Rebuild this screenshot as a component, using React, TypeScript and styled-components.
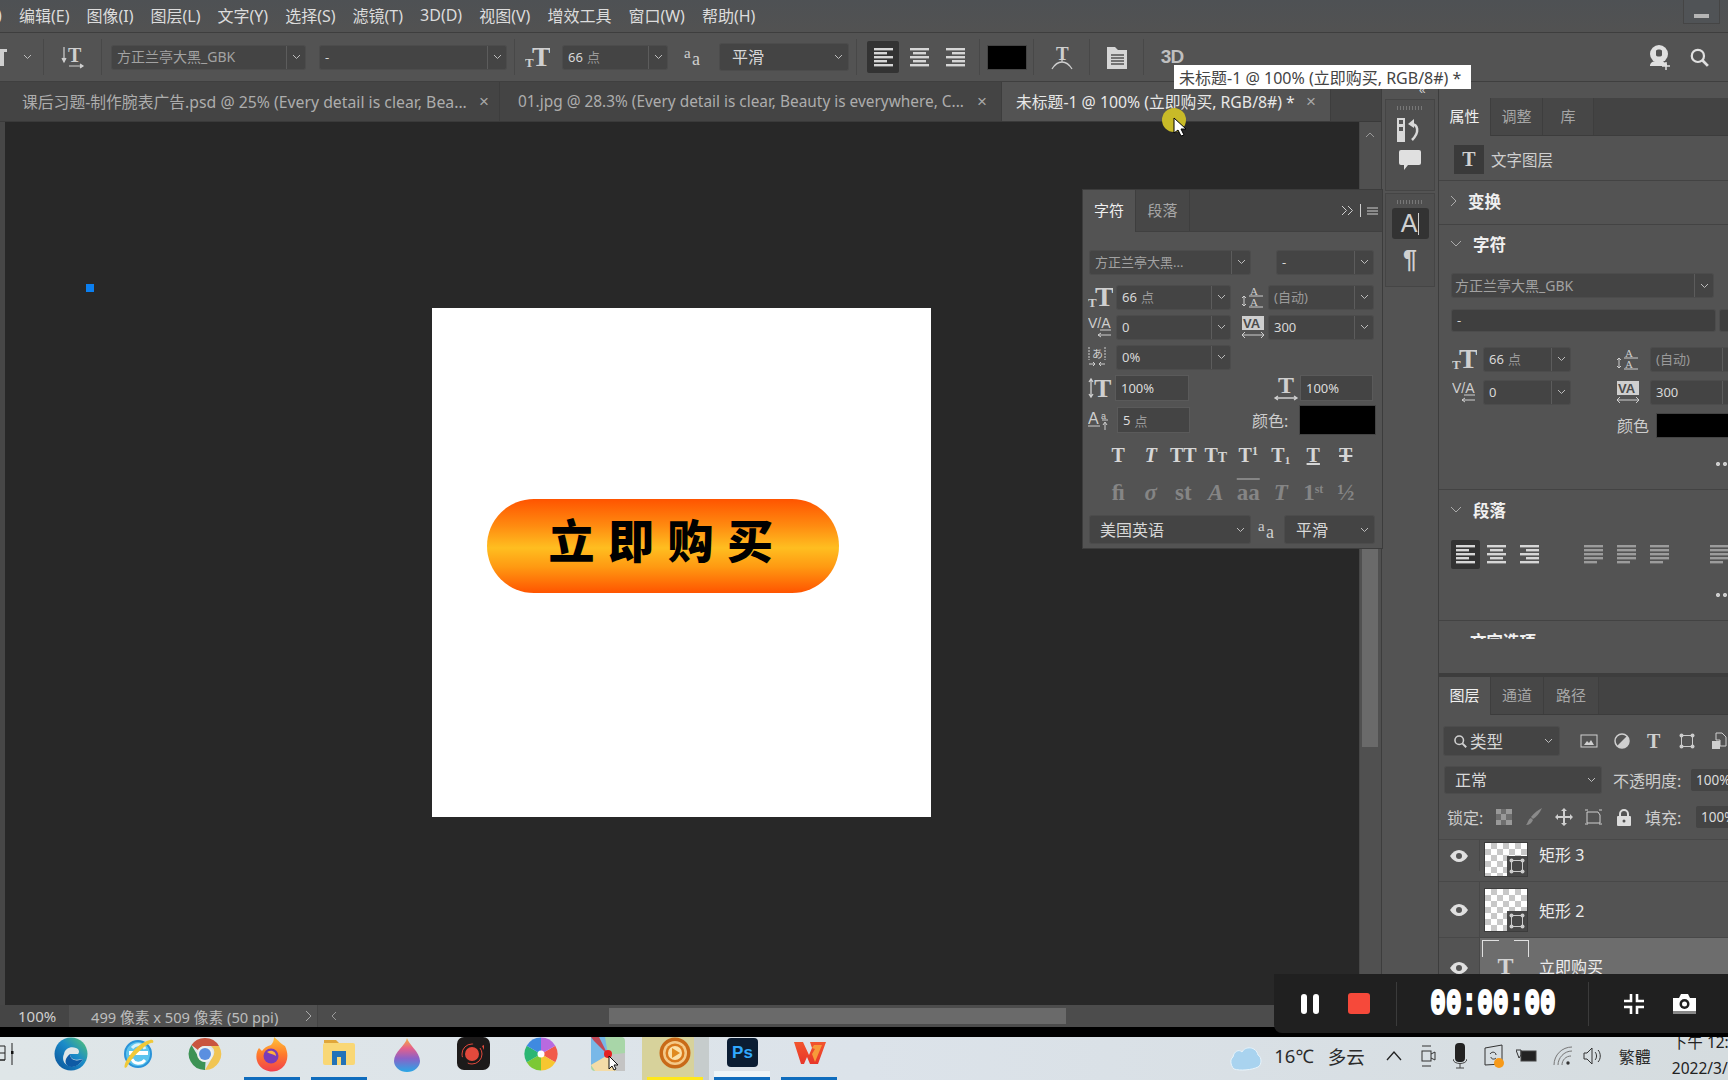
import React from "react";
import styled, { createGlobalStyle } from "styled-components";

const SANS = `"Noto Sans", "Noto Sans CJK SC", sans-serif`;
const Global = createGlobalStyle`
  html, body { margin: 0; padding: 0; background: #282828; }
  * { box-sizing: border-box; }
  svg { display: block; flex: none; }
  svg text { font-family: "Liberation Serif", serif; }
`;

const Page = styled.div`
  position: relative; width: 1728px; height: 1080px; overflow: hidden;
  display: flex; flex-direction: column; font-family: ${SANS}; font-size: 14px; color: #d6d6d6;
`;
const MenuBar = styled.div`
  height: 33px; flex: none; display: flex; align-items: center; gap: 17px; padding-bottom: 2px;
  background: linear-gradient(#4e5154, #525252); border-bottom: 1px solid #3e3e3e; position: relative; white-space: nowrap;
`;
const MenuItem = styled.span`font-size: 16px; color: #dcdcdc;`;
const MenuCut = styled(MenuItem)`width: 2px; flex: none; text-indent: -3px;`;
const MinBox = styled.div`
  position: absolute; right: 8px; top: 0; width: 37px; height: 24px; background: #505356; border: 1px solid #454545; border-top: 0;
  display: flex; align-items: flex-end; justify-content: center; padding-bottom: 5px;
  &::after { content: ""; width: 15px; height: 4px; background: #b5b5b5; }
`;
const OptionsBar = styled.div`
  height: 49px; flex: none; display: flex; align-items: stretch; background: #535353; border-bottom: 1px solid #3f3f3f;
`;
const OptCell = styled.div<{ $w: number; $gap?: number; $start?: number; $noline?: boolean }>`
  width: ${p => p.$w}px; flex: none; display: flex; align-items: center; gap: ${p => p.$gap ?? 0}px;
  justify-content: ${p => (p.$start !== undefined ? "flex-start" : "center")};
  padding-left: ${p => p.$start ?? 0}px; margin: 6px 0;
  border-right: ${p => (p.$noline ? "0" : "1px solid #484848")};
`;
const Spacer = styled.div`flex: 1;`;
const HGap = styled.div<{ $w: number }>`width: ${p => p.$w}px; flex: none;`;
const SelectBox = styled.div<{ $w: number; $h?: number; $dark?: boolean; $mt?: number }>`
  width: ${p => p.$w}px; height: ${p => p.$h ?? 23}px; flex: none; display: flex; align-items: stretch;
  background: ${p => (p.$dark ? "#3f3f3f" : "#444")}; border-radius: 2px; margin-top: ${p => p.$mt ?? 0}px;
  box-shadow: 0 0 0 1px #4c4c4c; overflow: hidden;
`;
const SelectText = styled.span<{ $dim?: boolean; $pl?: number; $fs?: number }>`
  flex: 1; min-width: 0; padding-left: ${p => p.$pl ?? 5}px; line-height: 1; display: flex; align-items: center; white-space: nowrap; overflow: hidden;
  font-size: ${p => p.$fs ?? 13}px; color: ${p => (p.$dim ? "#a2a2a2" : "#d8d8d8")};
`;
const Unit = styled.span`color: #9a9a9a; margin-left: 4px;`;
const UnitBare = styled(Unit)`margin-left: 0;`;
const ChevCell = styled.span<{ $line?: boolean; $w?: number }>`
  width: ${p => p.$w ?? 19}px; flex: none; display: flex; align-items: center; justify-content: center;
  border-left: ${p => (p.$line ? "1px solid #5c5c5c" : "0")};
`;

const Chev = ({ c = "#bdbdbd" }: { c?: string }) => (
  <svg width="9" height="6" viewBox="0 0 9 6"><path d="M1 1l3.5 3.5L8 1" fill="none" stroke={c} strokeWidth="1" /></svg>
);
const Select = (p: { w: number; h?: number; text: React.ReactNode; dim?: boolean; line?: boolean; dark?: boolean; pl?: number; mt?: number; cw?: number; fs?: number }) => (
  <SelectBox $w={p.w} $h={p.h} $dark={p.dark} $mt={p.mt}>
    <SelectText $dim={p.dim} $pl={p.pl} $fs={p.fs}>{p.text}</SelectText>
    <ChevCell $line={p.line !== false} $w={p.cw}><Chev /></ChevCell>
  </SelectBox>
);

const G = "#cfcfcf";
const T = (p: { x: number; y: number; s: number; w?: boolean; c?: string; i?: boolean; children: React.ReactNode }) => (
  <text x={p.x} y={p.y} fontSize={p.s} fontWeight={p.w === false ? 400 : 700} fontStyle={p.i ? "italic" : "normal"} fill={p.c ?? G}>{p.children}</text>
);
const SizeIcon = () => (
  <svg width="25" height="23" viewBox="0 0 25 23"><T x={0} y={21} s={13}>T</T><T x={7} y={20} s={28}>T</T></svg>
);
const OrientIcon = () => (
  <svg width="24" height="26" viewBox="0 0 24 26"><path d="M3 3v14M1 14l2 4 2-4M8 22h14M19 20l3 2-3 2" stroke={G} fill={G} strokeWidth="1.2" /><T x={7} y={18} s={20}>T</T></svg>
);
const AaIcon = () => (
  <svg width="20" height="20" viewBox="0 0 20 20"><T x={0} y={11} s={15} w={false}>a</T><T x={8} y={18} s={18} w={false}>a</T></svg>
);
const LeadIcon = () => (
  <svg width="24" height="24" viewBox="0 0 24 24"><text x="9" y="10" fontSize="11" fill={G}>A</text><text x="9" y="21" fontSize="11" fill={G}>A</text><path d="M8 11h14M8 22h14M3 11v10" stroke={G} /><path d="M1 13l2-2 2 2M1 19l2 2 2-2" stroke={G} fill="none" /></svg>
);
const KernIcon = () => (
  <svg width="24" height="24" viewBox="0 0 24 24"><text x="0" y="13" fontSize="14" fill={G} style={{ fontFamily: "Liberation Sans" }}>V/A</text><path d="M12 15h11M10 20h13M13 18l-3 2 3 2" stroke={G} fill="none" /></svg>
);
const TrackIcon = () => (
  <svg width="24" height="24" viewBox="0 0 24 24"><rect x="1" y="1" width="22" height="14" fill={G} /><text x="2" y="13" fontSize="13" fontWeight="700" fill="#4a4a4a" style={{ fontFamily: "Liberation Sans" }}>VA</text><path d="M1 20h22M4 17l-3 3 3 3M20 17l3 3-3 3" stroke={G} fill="none" /></svg>
);
const TsumeIcon = () => (
  <svg width="20" height="22" viewBox="0 0 20 22"><text x="4" y="12" fontSize="11" fill={G} style={{ fontFamily: "Noto Sans CJK JP" }}>あ</text><path d="M1 1v13M17 1v13" stroke={G} strokeDasharray="2 1" /><path d="M1 18h6M17 18h-6M5 16l2 2-2 2M13 16l-2 2 2 2" stroke={G} fill="none" /></svg>
);
const VScaleIcon = () => (
  <svg width="26" height="26" viewBox="0 0 26 26"><T x={6} y={22} s={26}>T</T><path d="M3 5v16M1 7l2-3 2 3M1 19l2 3 2-3" stroke={G} fill="none" strokeWidth="1.3" /></svg>
);
const HScaleIcon = () => (
  <svg width="26" height="26" viewBox="0 0 26 26"><T x={5} y={18} s={24}>T</T><path d="M2 23h22M5 21l-3 2 3 2M21 21l3 2-3 2" stroke={G} fill="none" strokeWidth="1.3" /></svg>
);
const BaseIcon = () => (
  <svg width="22" height="22" viewBox="0 0 22 22"><text x="0" y="15" fontSize="16" fill={G} style={{ fontFamily: "Liberation Sans" }}>A</text><path d="M0 17h12" stroke={G} /><text x="13" y="10" fontSize="9" fill={G} style={{ fontFamily: "Liberation Sans" }}>a</text><path d="M14 11h6M17 21v-7M15 16l2-3 2 3" stroke={G} fill="none" /></svg>
);
const AlignIcon = ({ k, c = "#d6d6d6" }: { k: "l" | "c" | "r" | "j"; c?: string }) => {
  const ws = [19, 13, 19, 13, 19];
  return (
    <svg width="19" height="19" viewBox="0 0 19 19">
      {ws.map((w, i) => {
        const wd = k === "j" ? (i === 4 ? 13 : 19) : w;
        const x = k === "l" || k === "j" ? 0 : k === "c" ? (19 - wd) / 2 : 19 - wd;
        return <rect key={i} x={x} y={i * 4} width={wd} height={2.4} fill={c} />;
      })}
    </svg>
  );
};
const AlignBtn = styled.div<{ $on?: boolean; $w?: number; $h?: number }>`
  width: ${p => p.$w ?? 32}px; height: ${p => p.$h ?? 32}px; display: flex; align-items: center; justify-content: center; flex: none;
  background: ${p => (p.$on ? "#333" : "transparent")}; border-radius: 2px;
`;
const Swatch = styled.div<{ $w: number; $h: number }>`
  width: ${p => p.$w}px; height: ${p => p.$h}px; background: #000; flex: none; box-shadow: 0 0 0 1px #444;
`;
const ThreeD = styled.span`font: 700 19px "Liberation Sans", sans-serif; letter-spacing: -1px; color: #bfbfbf;`;

/* Workspace */
const Workspace = styled.div`flex: none; height: 923px; display: flex; background: #535353;`;
const DocColumn = styled.div`width: 1381px; flex: none; display: flex; flex-direction: column;`;
const TabBar = styled.div`height: 40px; flex: none; display: flex; background: #444; border-bottom: 1px solid #3a3a3a;`;
const DocTab = styled.div<{ $w: number; $on?: boolean; $pl: number; $pr?: number; $fs?: number }>`
  width: ${p => p.$w}px; flex: none; display: flex; align-items: center; justify-content: space-between; padding: 0 ${p => p.$pr ?? 14}px 0 ${p => p.$pl}px;
  background: ${p => (p.$on ? "#535353" : "#444")}; color: ${p => (p.$on ? "#e8e8e8" : "#adadad")};
  border-right: 1px solid #3d3d3d; font-size: ${p => p.$fs ?? 15.8}px; white-space: nowrap;
`;
const Close = styled.span`font-size: 17px; color: #a8a8a8; font-family: "Liberation Sans", sans-serif;`;
const CanvasRow = styled.div`flex: 1; display: flex; min-height: 0;`;
const LeftEdge = styled.div`width: 5px; flex: none; background: #474747;`;
const Canvas = styled.div`
  flex: 1; background: #282828; position: relative; padding: 186px 0 0 427px;
`;
const Marker = styled.div`position: absolute; left: 81px; top: 162px; width: 8px; height: 8px; background: #0b7ff0;`;
const Artboard = styled.div`
  width: 499px; height: 509px; background: #fff; padding: 191px 0 0 55px;
`;
const Pill = styled.div`
  width: 352px; height: 94px; border-radius: 47px; display: flex; align-items: center; justify-content: center;
  background: linear-gradient(#ff5400 0%, #ff8a10 28%, #ffbe20 52%, #ff9a12 72%, #ff5400 100%);
  font-family: "Noto Sans CJK SC", sans-serif; font-weight: 900; font-size: 46px; color: #000; letter-spacing: 13.5px; padding: 0 0 16px 9px;
`;
const VScroll = styled.div`width: 22px; flex: none; background: #505050; border-left: 1px solid #474747; padding: 5px 3px 0 2px; display: flex; flex-direction: column; gap: 8px;`;
const ScrollThumb = styled.div`flex: none; height: 557px; margin-top: 39px; background: #6a6a6a;`;
const ScrollUp = styled.div`height: 16px; flex: none; display: flex; align-items: center; justify-content: center;`;

const Dock = styled.div`
  width: 57px; flex: none; padding: 17px 3px 0 3px; border-left: 1px solid #3d3d3d; display: flex; flex-direction: column; gap: 2px; position: relative;
`;
const Collapse = styled.span`position: absolute; left: 37px; top: 1px; color: #cfcfcf; font-size: 12px; line-height: 14px; font-family: "Liberation Sans", sans-serif;`;
const DockGroup = styled.div<{ $h: number; $gap: number }>`
  height: ${p => p.$h}px; background: #4f4f4f; border: 1px solid #454545;
  display: flex; flex-direction: column; align-items: center; padding-top: 6px; gap: ${p => p.$gap}px;
`;
const Grip = styled.div`
  width: 26px; height: 4px; flex: none; background: repeating-linear-gradient(90deg, #777 0 1px, transparent 1px 3px);
`;
const DockActive = styled.div`
  width: 37px; height: 31px; background: #333; border-radius: 3px; display: flex; align-items: center; justify-content: center; gap: 1px;
  font: 400 25px "Liberation Sans", sans-serif; color: #d0d0d0;
  &::after { content: ""; width: 1px; height: 22px; background: #d0d0d0; }
`;
const Pilcrow = styled.span`font: 700 25px/28px "Liberation Sans", sans-serif; color: #d0d0d0; margin-top: 2px;`;

/* Right panel */
const RightPanel = styled.div`flex: 1; min-width: 0; overflow: hidden; padding-top: 16px; border-left: 1px solid #3d3d3d; display: flex; flex-direction: column;`;
const PanelTabs = styled.div<{ $h?: number }>`height: ${p => p.$h ?? 38}px; flex: none; display: flex; background: #434343; border-bottom: 1px solid #3c3c3c;`;
const PanelTab = styled.div<{ $on?: boolean; $w: number }>`
  width: ${p => p.$w}px; flex: none; display: flex; align-items: center; justify-content: center; font-size: 15px; padding-bottom: 3px;
  background: ${p => (p.$on ? "#535353" : "#474747")}; color: ${p => (p.$on ? "#f0f0f0" : "#a6a6a6")};
  border-right: 1px solid #3e3e3e; margin-bottom: ${p => (p.$on ? "-1px" : "0")}; position: relative;
`;
const KindRow = styled.div`height: 45px; flex: none; display: flex; align-items: center; padding: 3px 0 0 15px; gap: 7px; border-bottom: 1px solid #434343; font-size: 15.5px; color: #cfcfcf;`;
const KindIcon = styled.div`width: 30px; height: 29px; background: #3a3a3a; display: flex; align-items: center; justify-content: center; font: 700 20px "Liberation Serif", serif; color: #d0d0d0;`;
const Section = styled.div<{ $h: number; $flat?: boolean }>`height: ${p => p.$h}px; flex: none; border-bottom: ${p => (p.$flat ? "0" : "1px solid #434343")}; overflow: hidden; position: relative;`;
const SectionHead = styled.div<{ $h?: number }>`
  height: ${p => p.$h ?? 43}px; display: flex; align-items: center; gap: 11px; padding: 0 0 3px 11px; font-weight: 700; font-size: 16.5px; color: #f0f0f0;
  font-family: "Noto Sans CJK SC", sans-serif;
`;
const ChevRight = () => <svg width="7" height="12" viewBox="0 0 7 12"><path d="M1 1l5 5-5 5" fill="none" stroke="#aaa" /></svg>;
const ChevDown = () => <svg width="12" height="7" viewBox="0 0 12 7"><path d="M1 1l5 5 5-5" fill="none" stroke="#aaa" /></svg>;
const FieldRow = styled.div<{ $mt?: number; $pl?: number; $gap?: number }>`
  display: flex; align-items: center; margin-top: ${p => p.$mt ?? 0}px; padding-left: ${p => p.$pl ?? 13}px; gap: ${p => p.$gap ?? 0}px;
`;
const IconSlot = styled.div<{ $w: number; $ml?: number }>`width: ${p => p.$w}px; margin-left: ${p => p.$ml ?? 0}px; flex: none; display: flex; justify-content: flex-start; align-items: center;`;
const Label = styled.span<{ $ml?: number; $w?: number; $right?: boolean }>`
  margin-left: ${p => p.$ml ?? 0}px; ${p => (p.$w ? `width:${p.$w}px;` : "")} flex: none; font-size: 16px; color: #cdcdcd; white-space: nowrap; text-align: ${p => (p.$right ? "right" : "left")};
`;
const Dots = styled.div<{ $ml: number; $mt: number }>`
  margin: ${p => p.$mt}px 0 0 ${p => p.$ml}px; width: 20px; height: 4px;
  background: radial-gradient(circle at 2px 2px, #ccc 2px, transparent 2.2px) 0 0 / 7px 4px repeat-x;
`;
const AlignRow = styled.div`display: flex; align-items: center; padding-left: 12px; margin-top: 8px;`;
const ClippedHead = styled.div`
  height: 6px; overflow: hidden; padding-left: 31px; font-size: 16.5px; font-weight: 700; color: #f0f0f0; line-height: 20px; margin-top: 12px;
  & > span { display: block; transform: translateY(-1px); }
`;
const DarkRule = styled.div`height: 4px; flex: none; background: #3d3d3d;`;
const FilterRow = styled.div`display: flex; align-items: center; padding: 0 0 0 5px; margin-top: 12px; height: 28px;`;
const SearchBox = styled.div`
  width: 115px; height: 28px; flex: none; background: #444; box-shadow: 0 0 0 1px #4c4c4c; display: flex; align-items: center; padding: 0 6px 0 9px; gap: 3px; font-size: 16.5px; border-radius: 2px;
  & > span { flex: 1; }
`;
const FilterIcons = styled.div`display: flex; margin-left: 14px; gap: 0;`;
const FilterCell = styled.div`width: 32.5px; flex: none; display: flex; justify-content: center; align-items: center;`;
const BlendRow = styled.div<{ $mt: number; $pl: number }>`display: flex; align-items: center; padding-left: ${p => p.$pl}px; margin-top: ${p => p.$mt}px;`;
const Amount = styled.div<{ $ml: number; $h?: number }>`
  margin-left: ${p => p.$ml}px; height: ${p => p.$h ?? 22}px; flex: 1; background: #444; display: flex; align-items: center; padding-left: 5px; font-size: 13.5px; color: #dcdcdc; border-radius: 2px 0 0 2px;
`;
const LockCell = styled.div`width: 30px; flex: none; display: flex; justify-content: center; align-items: center;`;
const LayerList = styled.div`margin-top: 10px; display: flex; flex-direction: column; border-top: 1px solid #484848;`;
const LayerRow = styled.div<{ $h: number; $on?: boolean; $pb?: number }>`
  height: ${p => p.$h}px; flex: none; display: flex; align-items: center; border-bottom: 1px solid #484848; padding-bottom: ${p => p.$pb ?? 0}px;
  background: ${p => (p.$on ? "#6d6d6d" : "#535353")};
`;
const EyeCell = styled.div`width: 41px; align-self: stretch; flex: none; background: #535353; border-right: 1px solid #484848; display: flex; align-items: center; justify-content: center;`;
const Thumb = styled.div<{ $h: number; $mt?: number }>`
  width: 42px; height: ${p => p.$h}px; margin: ${p => p.$mt ?? 0}px 0 0 5px; flex: none; position: relative;
  background: repeating-conic-gradient(#c8c8c8 0 25%, #fff 0 50%) 0 0 / 12px 12px; box-shadow: 0 0 0 1px #3c3c3c;
`;
const Badge = styled.div`
  position: absolute; right: 0; bottom: 0; width: 20px; height: 20px; background: #474747; display: flex; align-items: center; justify-content: center;
`;
const TextThumb = styled.div`
  width: 47px; height: 40px; margin-left: 2px; flex: none; position: relative; align-self: flex-start; margin-top: 1px;
  border-top: 1px solid transparent; display: flex; justify-content: center; padding-top: 14px; font: 700 24px/24px "Liberation Serif", serif; color: #d4d4d4;
  &::before { content: ""; position: absolute; left: 0; top: 0; width: 16px; height: 16px; border: solid #e0e0e0; border-width: 1px 0 0 1px; }
  &::after { content: ""; position: absolute; right: 0; top: 0; width: 14px; height: 16px; border: solid #e0e0e0; border-width: 1px 1px 0 0; }
`;
const LayerName = styled.span<{ $ml: number; $up?: number }>`margin-left: ${p => p.$ml}px; font-size: 16px; color: #ececec; transform: translateY(${p => p.$up ?? 0}px);`;

/* Status */
const StatusBar = styled.div`height: 22px; flex: none; display: flex; background: #4c4c4c; align-items: stretch; color: #d0d0d0; font-size: 15px;`;
const Zoom = styled.div`width: 69px; flex: none; background: #454545; padding-left: 18px; display: flex; align-items: center;`;
const DocInfo = styled.div`width: 249px; flex: none; background: #515151; padding: 0 5px 0 22px; display: flex; align-items: center; justify-content: space-between; color: #bdbdbd; border-right: 1px solid #444; white-space: nowrap; font-size: 14.7px;`;
const HTrack = styled.div`flex: 1; display: flex; align-items: center; padding-left: 13px;`;
const HThumb = styled.div`width: 457px; height: 16px; background: #6a6a6a; margin-left: 272px;`;
const BlackBar = styled.div`height: 10px; flex: none; background: #000;`;

/* Taskbar */
const Taskbar = styled.div`flex: 1; display: flex; align-items: stretch; background: linear-gradient(90deg, #dfe6e8, #dce3ea 50%, #d5dcdf); position: relative; overflow: hidden;`;
const TaskEdge = styled.div`width: 37px; flex: none; padding-top: 4px; overflow: hidden; position: relative;`;
const TaskIcons = styled.div`display: flex;`;
const TaskSlot = styled.div<{ $bar?: string; $bg?: string; $top?: boolean }>`
  width: 67.2px; flex: none; display: flex; justify-content: center; padding-top: 0; position: relative;
  background: ${p => p.$bg ?? "transparent"};
  &::after { content: ""; position: absolute; left: 5px; right: 6px; bottom: 0; height: ${p => (p.$bar ? "3px" : "0")}; background: ${p => p.$bar ?? "none"}; }
  &::before { content: ""; position: absolute; left: 5px; right: 6px; bottom: 3px; height: ${p => (p.$top ? "6px" : "0")}; background: #eef5f8; }
`;
const Tray = styled.div`flex: 1; display: flex; align-items: center; padding-left: 387px; color: #222; white-space: nowrap; position: relative; padding-bottom: 6px; overflow: hidden;`;
const TrayText = styled.span<{ $ml: number; $s?: number }>`margin-left: ${p => p.$ml}px; font-size: ${p => p.$s ?? 18.5}px; color: #2b2b2b; flex: none;`;
const TrayIcon = styled.div<{ $ml: number }>`margin-left: ${p => p.$ml}px; flex: none; display: flex;`;
const Clock = styled.div`
  margin-left: 21px; flex: none; display: flex; flex-direction: column; font-size: 15.5px; line-height: 26px; color: #222; margin-top: -14px; height: 52px; transform: translateY(6px);
`;

/* Overlays */
const Tooltip = styled.div`
  position: absolute; left: 1174px; top: 65px; width: 297px; height: 24px; background: #fff; color: #444; font-size: 16px; display: flex; align-items: center; padding-left: 5px; white-space: nowrap; z-index: 6;
`;
const Spot = styled.div`position: absolute; left: 1162px; top: 108px; width: 24px; height: 24px; border-radius: 50%; background: #c8ba28; z-index: 5;`;
const Pointer = styled.div`position: absolute; left: 1173px; top: 117px; z-index: 6;`;
const Float = styled.div`
  position: absolute; left: 1083px; top: 190px; width: 299px; height: 358px; background: #535353; box-shadow: 0 0 0 1px #3c3c3c; z-index: 3; display: flex; flex-direction: column;
`;
const FloatTabs = styled.div`height: 42px; flex: none; display: flex; background: #454545; position: relative; border-bottom: 1px solid #404040;`;
const FloatMenu = styled.div`position: absolute; right: 4px; top: 14px; display: flex; align-items: center; gap: 6px;`;
const FloatRow = styled.div<{ $mt: number; $h?: number; $pl?: number }>`
  height: ${p => p.$h ?? 22}px; margin-top: ${p => p.$mt}px; flex: none; display: flex; align-items: center; padding-left: ${p => p.$pl ?? 5}px;
`;
const FloatCol = styled.div<{ $w: number; $full?: boolean }>`width: ${p => p.$w}px; flex: none; display: flex; align-items: center; height: ${p => (p.$full ? "100%" : "auto")};`;
const TextInput = styled.div<{ $w: number }>`
  width: ${p => p.$w}px; height: 100%; flex: none; background: #444; box-shadow: inset 0 0 0 1px #5a5a5a; padding-left: 6px; font-size: 13px; color: #dcdcdc; display: flex; align-items: center;
`;
const GlyphRow = styled.div<{ $mt: number; $dim?: boolean }>`
  margin-top: ${p => p.$mt}px; height: 30px; flex: none; display: flex; padding-left: 19px;
  color: ${p => (p.$dim ? "#858585" : "#d6d6d6")}; font: 700 ${p => (p.$dim ? 23 : 20)}px/30px "Liberation Serif", serif;
`;
const Glyph = styled.div<{ $ul?: boolean; $st?: boolean; $i?: boolean; $ol?: boolean }>`
  width: 32.5px; flex: none; display: flex; align-items: baseline; justify-content: center; white-space: nowrap;
  font-style: ${p => (p.$i ? "italic" : "normal")};
  text-decoration: ${p => (p.$ul ? "underline" : p.$st ? "line-through" : p.$ol ? "overline" : "none")};
`;
const SmallCap = styled.span`font-size: 14px;`;
const Sup = styled.span`font-size: 12px; transform: translateY(-7px);`;
const Sub = styled.span`font-size: 11px; transform: translateY(2px);`;

const RecBar = styled.div`
  position: absolute; left: 1274px; top: 974px; width: 454px; height: 59px; background: #202020; z-index: 7; border-radius: 0 0 0 8px;
  display: flex; align-items: center; color: #fff;
`;
const Pause = styled.div`
  margin-left: 27px; width: 18px; height: 20px; display: flex; justify-content: space-between; flex: none;
  &::before, &::after { content: ""; width: 6px; height: 100%; background: #fff; border-radius: 3px; }
`;
const Stop = styled.div`margin-left: 29px; width: 22px; height: 21px; border-radius: 3px; background: #f6493a; flex: none;`;
const RecDiv = styled.div<{ $ml: number }>`margin-left: ${p => p.$ml}px; width: 1px; height: 44px; background: #3b3b3b; flex: none;`;
const Timer = styled.div`
  margin-left: 32px; flex: none; width: 128px; text-align: center; font: 700 26px "Liberation Mono", monospace; color: #fff; -webkit-text-stroke: 1.6px #fff; transform: scaleY(1.4); letter-spacing: 0.1px;
`;
const RecIcon = styled.div<{ $ml: number }>`margin-left: ${p => p.$ml}px; flex: none; display: flex;`;

const sector = (cx: number, cy: number, r: number, a: number, b: number) => {
  const p = (d: number) => [cx + r * Math.cos((d * Math.PI) / 180), cy + r * Math.sin((d * Math.PI) / 180)];
  const [x1, y1] = p(a), [x2, y2] = p(b);
  return `M${cx} ${cy}L${x1} ${y1}A${r} ${r} 0 ${b - a > 180 ? 1 : 0} 1 ${x2} ${y2}Z`;
};

const EdgeLogo = () => (
  <svg width="36" height="34" viewBox="0 0 36 34">
    <defs>
      <linearGradient id="eg" x1="0" y1="1" x2="1" y2="0"><stop offset="0" stopColor="#0a4f96" /><stop offset="0.55" stopColor="#1a8bc9" /><stop offset="1" stopColor="#5ac86c" /></linearGradient>
    </defs>
    <circle cx="18" cy="17" r="16.5" fill="url(#eg)" />
    <path d="M11 17c1-6 7-8 12-6 3 1 4 4 2 6h-8c0 5 5 7 13 5-3 6-9 9-14 7-6-2-7-8-5-12z" fill="#dfe6e8" />
    <path d="M17 17c0 6 6 8 13 5-3 6-10 10-15 7 -4-3-3-8 2-12z" fill="#0e5aa5" />
  </svg>
);
const IELogo = () => (
  <svg width="36" height="34" viewBox="0 0 36 34">
    <circle cx="18" cy="17" r="13" fill="#5cc4ee" stroke="#2a93d8" strokeWidth="2" />
    <path d="M9 16h19" stroke="#fff" strokeWidth="4" />
    <path d="M25 23c-4 5-11 4-13-1" stroke="#fff" strokeWidth="3" fill="none" />
    <path d="M12 11c4-5 11-4 13 1" stroke="#d8f2fb" strokeWidth="3" fill="none" />
    <path d="M5 31C2 27 16 6 30 3c3-1 4 1 3 3-3-3-22 14-26 24z" fill="#f0c93a" />
  </svg>
);
const ChromeLogo = () => (
  <svg width="34" height="34" viewBox="0 0 34 34">
    <path d="M17 1a16 16 0 0 1 14 8H17a8 8 0 0 0-7 4L3.500 8A16 16 0 0 1 17 1z" fill="#c9553f" />
    <path d="M31 9a16 16 0 0 1-14 24l7-12a8 8 0 0 0-1-12z" fill="#f1c553" />
    <path d="M3.500 8l7 12a8 8 0 0 0 7 5l-.5 8A16 16 0 0 1 3.500 8z" fill="#3d9355" />
    <circle cx="17" cy="17" r="8" fill="#edf0f0" /><circle cx="17" cy="17" r="6" fill="#5a8fe0" />
  </svg>
);
const FirefoxLogo = () => (
  <svg width="36" height="36" viewBox="0 0 36 36">
    <defs><linearGradient id="ff" x1="0.5" y1="0" x2="0.5" y2="1"><stop offset="0" stopColor="#ffc43a" /><stop offset="0.5" stopColor="#ff7a2c" /><stop offset="1" stopColor="#f0404e" /></linearGradient></defs>
    <path d="M20 0c5 4 6 6 11 9 4 8 3 17-3 22-7 6-18 4-23-3C1 22 2 15 5 11l3 3c2-3 5-5 9-6 2-2 3-5 3-8z" fill="url(#ff)" />
    <circle cx="17" cy="19" r="7.500" fill="#7a3bb8" /><path d="M13 15c5-3 9 0 9 4-3-2-6-2-9-4z" fill="#ffb13d" />
  </svg>
);
const FolderLogo = () => (
  <svg width="34" height="32" viewBox="0 0 34 32">
    <path d="M2 3h12l3 3H2z" fill="#e0a63a" /><rect x="1" y="6" width="32" height="22" rx="2" fill="#f9d775" />
    <path d="M10 14h14v14h-5v-8h-4v8h-5z" fill="#2272b8" />
  </svg>
);
const DropLogo = () => (
  <svg width="30" height="36" viewBox="0 0 30 36">
    <defs><linearGradient id="dr" x1="0" y1="0" x2="0" y2="1"><stop offset="0" stopColor="#f6b13a" /><stop offset="0.3" stopColor="#e5608a" /><stop offset="0.6" stopColor="#8a62c8" /><stop offset="1" stopColor="#28a8e6" /></linearGradient></defs>
    <path d="M15 1c1 6 13 14 13 23a13 11 0 0 1-26 0C2 15 14 8 15 1z" fill="url(#dr)" />
  </svg>
);
const RecLogo = () => (
  <svg width="33" height="33" viewBox="0 0 33 33">
    <rect width="33" height="33" rx="7" fill="#1c1a1a" /><circle cx="15" cy="17" r="7" fill="#e2493c" /><circle cx="15" cy="17" r="10" fill="none" stroke="#e2493c" strokeWidth="1" strokeDasharray="20 8" /><path d="M25 9l2-1v5z" fill="#e2493c" />
  </svg>
);
const WheelLogo = () => (
  <svg width="34" height="34" viewBox="0 0 34 34">
    {["#f15a4a", "#f7c630", "#7cc835", "#2bb673", "#3f8ae0", "#b86ae0"].map((c, i) => (
      <path key={c} d={sector(17, 17, 16.5, -30 + i * 60, 30 + i * 60)} fill={c} />
    ))}
    <circle cx="17" cy="17" r="3.500" fill="#fff" />
  </svg>
);
const MapLogo = () => (
  <svg width="34" height="34" viewBox="0 0 34 34">
    <rect width="34" height="34" rx="4" fill="#a8d6a8" />
    <path d="M0 0h14L17 18 0 28z" fill="#78b8e8" /><path d="M0 28L17 18l8 16H4z" fill="#f4dca8" /><path d="M25 34L17 18l17-2v18z" fill="#c4c4c4" />
    <path d="M0 0h8l9 18L3 4z" fill="#c04a58" /><circle cx="17" cy="17" r="4" fill="#e42222" />
    <path d="M18 19v13l3-3 2 4 2-1-2-4h4z" fill="#fff" stroke="#111" />
  </svg>
);
const PlayLogo = () => (
  <svg width="32" height="32" viewBox="0 0 32 32">
    <circle cx="16" cy="16" r="15.500" fill="#c86a18" /><circle cx="16" cy="16" r="12" fill="#f4c988" /><circle cx="16" cy="16" r="9.500" fill="#d9791c" /><circle cx="16" cy="16" r="7" fill="#fbe0a8" />
    <path d="M13 11l8 5-8 5z" fill="#e08a20" />
  </svg>
);
const PsBadge = styled.div`width: 31px; height: 29px; background: #0b1d33; border-radius: 4px; color: #31a8ff; font: 700 17px/29px "Liberation Sans", sans-serif; text-align: center; margin-top: 1px;`;
const WpsLogo = () => (
  <svg width="34" height="30" viewBox="0 0 34 30">
    <defs><linearGradient id="wp" x1="0" y1="0" x2="0" y2="1"><stop offset="0" stopColor="#f2552e" /><stop offset="1" stopColor="#e8362a" /></linearGradient></defs>
    <path d="M1 5h9l6 13 3-7-2-6h16l-8 22h-8l-3-7-3 7H8z" fill="url(#wp)" />
    <path d="M19 11l2-3h8l-7 17-3-8 3-5z" fill="#f79a3a" />
  </svg>
);
const Eye = () => (
  <svg width="20" height="14" viewBox="0 0 20 14"><path d="M1 7c5-8 13-8 18 0-5 8-13 8-18 0z" fill="#e0e0e0" /><circle cx="10" cy="7" r="3" fill="#555" /></svg>
);
const ShapeBadge = () => (
  <svg width="16" height="16" viewBox="0 0 16 16"><rect x="2.500" y="2.500" width="11" height="11" fill="none" stroke="#ccc" />{[[2.500, 2.500], [13.500, 2.500], [2.500, 13.500], [13.500, 13.500]].map(([x, y]) => <circle key={x + "-" + y} cx={x} cy={y} r="2" fill="#ccc" />)}</svg>
);
const Search = ({ s = 18, c = "#e0e0e0" }: { s?: number; c?: string }) => (
  <svg width={s} height={s} viewBox="0 0 18 18"><circle cx="8" cy="8" r="5.500" fill="none" stroke={c} strokeWidth="2" /><path d="M12 12l5 5" stroke={c} strokeWidth="2.500" /></svg>
);

export default function App() {
  const menus = ["编辑(E)", "图像(I)", "图层(L)", "文字(Y)", "选择(S)", "滤镜(T)", "3D(D)", "视图(V)", "增效工具", "窗口(W)", "帮助(H)"];
  return (
    <Page>
      <Global />
      <MenuBar>
        <MenuCut>)</MenuCut>
        {menus.map(m => <MenuItem key={m}>{m}</MenuItem>)}
        <MinBox />
      </MenuBar>
      <OptionsBar>
        <OptCell $w={44} $gap={15} $start={0}>
          <svg width="8" height="22" viewBox="0 0 8 22"><rect x="0" y="3" width="7" height="3" fill={G} /><rect x="0" y="3" width="4" height="17" fill={G} /></svg>
          <Chev />
        </OptCell>
        <OptCell $w={58}><OrientIcon /></OptCell>
        <OptCell $w={413} $start={10} $gap={15}>
          <Select w={193} text="方正兰亭大黑_GBK" dim fs={14} />
          <Select w={186} text="-" />
        </OptCell>
        <OptCell $w={342} $start={10}>
          <SizeIcon />
          <HGap $w={13} />
          <Select w={104} text={<>66<Unit>点</Unit></>} />
          <HGap $w={17} />
          <AaIcon />
          <HGap $w={16} />
          <Select w={128} h={26} text="平滑" line={false} pl={12} fs={16} />
        </OptCell>
        <OptCell $w={123} $start={10} $gap={4}>
          <AlignBtn $on><AlignIcon k="l" /></AlignBtn>
          <AlignBtn><AlignIcon k="c" /></AlignBtn>
          <AlignBtn><AlignIcon k="r" /></AlignBtn>
        </OptCell>
        <OptCell $w={54}><Swatch $w={38} $h={23} /></OptCell>
        <OptCell $w={56}>
          <svg width="24" height="26" viewBox="0 0 24 26"><T x={6} y={16} s={19}>T</T><path d="M12 14v4M2 25c3-5 7-7 10-7s7 2 10 7" fill="none" stroke={G} strokeWidth="1.300" /></svg>
        </OptCell>
        <OptCell $w={54}>
          <svg width="22" height="26" viewBox="0 0 22 26"><path d="M1 3h8l3 3h9v19H1z" fill="#d6d6d6" /><path d="M5 11h13M5 14h13M5 17h13M5 20h13" stroke="#535353" strokeWidth="1.500" /></svg>
        </OptCell>
        <OptCell $w={56} $noline><ThreeD>3D</ThreeD></OptCell>
        <Spacer />
        <OptCell $w={32} $noline>
          <svg width="24" height="26" viewBox="0 0 24 26"><circle cx="11" cy="10" r="9" fill="#e0e0e0" /><path d="M8 7c0-2 6-2 6 0v4c0 2-6 2-6 0z" fill="#535353" /><path d="M2 21c1-4 5-4 9-4s7 2 8 3v2H2z" fill="#e0e0e0" /><path d="M18 18v8M14 22h8" stroke="#e0e0e0" strokeWidth="1.500" /></svg>
        </OptCell>
        <OptCell $w={46} $noline><Search s={20} /></OptCell>
        <HGap $w={6} />
      </OptionsBar>

      <Workspace>
        <DocColumn>
          <TabBar>
            <DocTab $w={500} $pl={22} $pr={10}>课后习题-制作腕表广告.psd @ 25% (Every detail is clear, Bea...<Close>×</Close></DocTab>
            <DocTab $w={502} $pl={18} $fs={15.4}>01.jpg @ 28.3% (Every detail is clear, Beauty is everywhere, C...<Close>×</Close></DocTab>
            <DocTab $w={329} $pl={14} $on>未标题-1 @ 100% (立即购买, RGB/8#) *<Close>×</Close></DocTab>
          </TabBar>
          <CanvasRow>
            <LeftEdge />
            <Canvas>
              <Marker />
              <Artboard>
                <Pill>立即购买</Pill>
              </Artboard>
            </Canvas>
            <VScroll>
              <ScrollUp><svg width="10" height="6" viewBox="0 0 10 6"><path d="M1 5l4-4 4 4" fill="none" stroke="#999" /></svg></ScrollUp>
              <ScrollThumb />
            </VScroll>
          </CanvasRow>
        </DocColumn>

        <Dock>
          <Collapse>«</Collapse>
          <DockGroup $h={92} $gap={8}>
            <Grip />
            <svg width="28" height="24" viewBox="0 0 28 24"><rect x="1" y="0" width="8" height="24" fill="#d8d8d8" /><rect x="3" y="2" width="4" height="4" fill="#555" /><rect x="3" y="9" width="4" height="4" fill="#555" /><path d="M15 6c7 0 9 8 1 16" fill="none" stroke="#d8d8d8" strokeWidth="2.500" /><path d="M12 6l6-5v9z" fill="#d8d8d8" /></svg>
            <svg width="22" height="20" viewBox="0 0 22 20"><path d="M2 0h18a2 2 0 0 1 2 2v11a2 2 0 0 1-2 2H9l-4 5v-5H2a2 2 0 0 1-2-2V2a2 2 0 0 1 2-2z" fill="#e0e0e0" /></svg>
          </DockGroup>
          <DockGroup $h={94} $gap={4}>
            <Grip />
            <DockActive>A</DockActive>
            <Pilcrow>¶</Pilcrow>
          </DockGroup>
        </Dock>

        <RightPanel>
          <PanelTabs>
            <PanelTab $w={52} $on>属性</PanelTab>
            <PanelTab $w={52}>调整</PanelTab>
            <PanelTab $w={51}>库</PanelTab>
          </PanelTabs>
          <KindRow><KindIcon>T</KindIcon>文字图层</KindRow>
          <Section $h={44}><SectionHead><ChevRight />变换</SectionHead></Section>
          <Section $h={265}>
            <SectionHead $h={40}><ChevDown />字符</SectionHead>
            <FieldRow $mt={9}><Select w={261} text="方正兰亭大黑_GBK" dim cw={19} fs={14} pl={3} /></FieldRow>
            <FieldRow $mt={13} $gap={5}>
              <SelectBox $w={263} $h={21} $dark><SelectText>-</SelectText></SelectBox>
              <SelectBox $w={20} $h={21} $dark />
            </FieldRow>
            <FieldRow $mt={16}>
              <IconSlot $w={32}><SizeIcon /></IconSlot>
              <Select w={86} text={<>66<Unit>点</Unit></>} />
              <IconSlot $w={35} $ml={46}><LeadIcon /></IconSlot>
              <Select w={90} text={<UnitBare>(自动)</UnitBare>} />
            </FieldRow>
            <FieldRow $mt={9}>
              <IconSlot $w={32}><KernIcon /></IconSlot>
              <Select w={86} text="0" />
              <IconSlot $w={35} $ml={46}><TrackIcon /></IconSlot>
              <Select w={90} text="300" />
            </FieldRow>
            <FieldRow $mt={9}>
              <Label $ml={165} $w={40}>颜色</Label>
              <Swatch $w={80} $h={23} />
            </FieldRow>
            <Dots $ml={277} $mt={25} />
          </Section>
          <Section $h={131}>
            <SectionHead $h={42}><ChevDown />段落</SectionHead>
            <AlignRow>
              <AlignBtn $on $w={29} $h={29}><AlignIcon k="l" /></AlignBtn>
              <AlignBtn $w={33} $h={29}><AlignIcon k="c" /></AlignBtn>
              <AlignBtn $w={33} $h={29}><AlignIcon k="r" /></AlignBtn>
              <HGap $w={31} />
              <AlignBtn $w={33} $h={29}><AlignIcon k="j" c="#9c9c9c" /></AlignBtn>
              <AlignBtn $w={33} $h={29}><AlignIcon k="j" c="#9c9c9c" /></AlignBtn>
              <AlignBtn $w={33} $h={29}><AlignIcon k="j" c="#9c9c9c" /></AlignBtn>
              <HGap $w={27} />
              <AlignBtn $w={33} $h={29}><AlignIcon k="j" c="#9c9c9c" /></AlignBtn>
            </AlignRow>
            <Dots $ml={277} $mt={24} />
          </Section>
          <Section $h={52} $flat>
            <ClippedHead><span>文字选项</span></ClippedHead>
          </Section>
          <DarkRule />
          <PanelTabs>
            <PanelTab $w={52} $on>图层</PanelTab>
            <PanelTab $w={53}>通道</PanelTab>
            <PanelTab $w={55}>路径</PanelTab>
          </PanelTabs>
          <FilterRow>
            <SearchBox><Search s={14} c="#d0d0d0" /><span>类型</span><Chev /></SearchBox>
            <FilterIcons>
              <FilterCell><svg width="18" height="14" viewBox="0 0 18 14"><rect x="1" y="1" width="16" height="12" fill="none" stroke={G} /><path d="M4 11l3-4 2 2 2-3 3 5z" fill={G} /></svg></FilterCell>
              <FilterCell><svg width="16" height="16" viewBox="0 0 16 16"><circle cx="8" cy="8" r="7" fill="none" stroke={G} strokeWidth="1.500" /><path d="M13 3A7 7 0 0 1 3 13z" fill={G} /></svg></FilterCell>
              <FilterCell><svg width="16" height="18" viewBox="0 0 16 18"><T x={1} y={16} s={20}>T</T></svg></FilterCell>
              <FilterCell><ShapeBadge /></FilterCell>
              <FilterCell><svg width="16" height="18" viewBox="0 0 16 18"><path d="M5 1h6l4 4v9H9V8H5z" fill="none" stroke={G} /><rect x="1" y="9" width="8" height="8" fill={G} /></svg></FilterCell>
            </FilterIcons>
          </FilterRow>
          <BlendRow $mt={12} $pl={6}>
            <Select w={156} h={26} text="正常" line={false} pl={10} fs={16} />
            <Label $ml={12} $w={78}>不透明度:</Label>
            <Amount $ml={0}>100%</Amount>
          </BlendRow>
          <BlendRow $mt={12} $pl={8}>
            <Label $w={42}>锁定:</Label>
            <LockCell><svg width="16" height="16" viewBox="0 0 16 16"><rect width="16" height="16" fill="#6e6e6e" /><path d="M0 0h5v5H0zM10 0h6v5h-6zM5 5h5v6H5zM0 11h5v5H0zM10 11h6v5h-6z" fill="#999" /></svg></LockCell>
            <LockCell><svg width="18" height="18" viewBox="0 0 18 18"><path d="M17 0c-2 5-6 9-9 11l-2-2c3-4 7-7 11-9zM6 10l2 2c-1 3-4 5-7 5 2-2 2-6 5-7z" fill="#8a8a8a" /></svg></LockCell>
            <LockCell><svg width="18" height="18" viewBox="0 0 18 18"><path d="M9 0l3 3h-2v5h5V6l3 3-3 3v-2h-5v5h2l-3 3-3-3h2v-5H3v2L0 9l3-3v2h5V3H6z" fill={G} /></svg></LockCell>
            <LockCell><svg width="18" height="16" viewBox="0 0 18 16"><path d="M2 3h11l2 3v8H2z" fill="none" stroke={G} /><path d="M0 1h3M14 1h3M0 15h3M14 15h3" stroke={G} /></svg></LockCell>
            <LockCell><svg width="14" height="17" viewBox="0 0 14 17"><path d="M3 7V5a4 4 0 0 1 8 0v2" fill="none" stroke="#ddd" strokeWidth="2" /><rect y="7" width="14" height="10" rx="1" fill="#ddd" /><circle cx="7" cy="12" r="1.500" fill="#535353" /></svg></LockCell>
            <Label $ml={6} $w={51}>填充:</Label>
            <Amount $ml={0}>100%</Amount>
          </BlendRow>
          <LayerList>
            <LayerRow $h={42} $pb={10}>
              <EyeCell><Eye /></EyeCell>
              <Thumb $h={33} $mt={7}><Badge><ShapeBadge /></Badge></Thumb>
              <LayerName $ml={12} $up={-2}>矩形 3</LayerName>
            </LayerRow>
            <LayerRow $h={56}>
              <EyeCell><Eye /></EyeCell>
              <Thumb $h={42}><Badge><ShapeBadge /></Badge></Thumb>
              <LayerName $ml={12}>矩形 2</LayerName>
            </LayerRow>
            <LayerRow $h={70} $on $pb={10}>
              <EyeCell><Eye /></EyeCell>
              <TextThumb>T</TextThumb>
              <LayerName $ml={10} $up={-2}>立即购买</LayerName>
            </LayerRow>
          </LayerList>
        </RightPanel>
      </Workspace>

      <StatusBar>
        <Zoom>100%</Zoom>
        <DocInfo>499 像素 x 509 像素 (50 ppi)<ChevRight /></DocInfo>
        <HTrack><svg width="6" height="10" viewBox="0 0 6 10"><path d="M5 1L1 5l4 4" fill="none" stroke="#999" /></svg><HThumb /></HTrack>
      </StatusBar>
      <BlackBar />
      <Taskbar>
        <TaskEdge>
          <svg width="14" height="26" viewBox="0 0 14 26"><path d="M0 5h5v14H0M0 12h5M0 19h5M12 2v22" stroke="#222" fill="none" /><rect x="11" y="10" width="2.500" height="3" fill="#111" /></svg>
        </TaskEdge>
        <TaskIcons>
          <TaskSlot><EdgeLogo /></TaskSlot>
          <TaskSlot><IELogo /></TaskSlot>
          <TaskSlot><ChromeLogo /></TaskSlot>
          <TaskSlot $bar="#0f6cbd"><FirefoxLogo /></TaskSlot>
          <TaskSlot $bar="#0f6cbd"><FolderLogo /></TaskSlot>
          <TaskSlot><DropLogo /></TaskSlot>
          <TaskSlot><RecLogo /></TaskSlot>
          <TaskSlot><WheelLogo /></TaskSlot>
          <TaskSlot><MapLogo /></TaskSlot>
          <TaskSlot $bar="#ffe81a" $bg="linear-gradient(90deg, #d7d29b 0 78%, #c6cccc 78%)"><PlayLogo /></TaskSlot>
          <TaskSlot $bar="#0f6cbd" $top><PsBadge>Ps</PsBadge></TaskSlot>
          <TaskSlot $bar="#0f6cbd"><WpsLogo /></TaskSlot>
        </TaskIcons>
        <Tray>
          <TrayIcon $ml={0}><svg width="32" height="30" viewBox="0 0 32 30"><path d="M4 28C0 24 0 18 3 16c1-6 6-8 9-5 3-6 14-6 16 3 4 2 4 10 0 12-6 3-18 4-24 2z" fill="#a9d3ef" stroke="#e8f4fb" /></svg></TrayIcon>
          <TrayText $ml={12}>16℃</TrayText>
          <TrayText $ml={14}>多云</TrayText>
          <TrayIcon $ml={21}><svg width="16" height="10" viewBox="0 0 16 10"><path d="M1 9l7-8 7 8" fill="none" stroke="#222" strokeWidth="1.300" /></svg></TrayIcon>
          <TrayIcon $ml={18}><svg width="16" height="24" viewBox="0 0 16 24"><rect x="2" y="7" width="9" height="10" fill="none" stroke="#333" /><path d="M11 10l4-2v8l-4-2M2 2h9M2 22h9" fill="none" stroke="#333" /></svg></TrayIcon>
          <TrayIcon $ml={17}><svg width="14" height="26" viewBox="0 0 14 26"><rect x="2" y="0" width="10" height="19" rx="4" fill="#222" /><path d="M0 16c0 6 14 6 14 0M7 21v4M3 25h8" stroke="#444" fill="none" /></svg></TrayIcon>
          <TrayIcon $ml={17}><svg width="22" height="26" viewBox="0 0 22 26"><path d="M1 5l17-3v19L1 22z" fill="none" stroke="#333" /><path d="M6 11c2-3 6-2 6 1M12 15c-2 2-5 1-5-1" fill="none" stroke="#333" /><circle cx="15" cy="20" r="5" fill="#f79a1a" /></svg></TrayIcon>
          <TrayIcon $ml={10}><svg width="22" height="14" viewBox="0 0 22 14"><rect x="5" y="2" width="15" height="10" fill="#222" stroke="#444" /><path d="M0 1h5v5L3 9z" fill="none" stroke="#333" /></svg></TrayIcon>
          <TrayIcon $ml={15}><svg width="20" height="20" viewBox="0 0 20 20"><path d="M1 19C1 9 9 1 19 1M5 19c0-7 6-14 14-14M9 19c0-5 4-9 9-9" fill="none" stroke="#777" /><circle cx="15" cy="17" r="1.700" fill="#333" /></svg></TrayIcon>
          <TrayIcon $ml={10}><svg width="20" height="20" viewBox="0 0 20 20"><path d="M1 7h3l5-5v16l-5-5H1z" fill="none" stroke="#333" /><path d="M12 6c2 2 2 6 0 8M15 4c3 3 3 9 0 12" fill="none" stroke="#333" /></svg></TrayIcon>
          <TrayText $ml={16} $s={16}>繁體</TrayText>
          <Clock><span>下午 12:</span><span>2022/3/</span></Clock>
        </Tray>
      </Taskbar>

      <Tooltip>未标题-1 @ 100% (立即购买, RGB/8#) *</Tooltip>
      <Spot />
      <Pointer><svg width="13" height="20" viewBox="0 0 13 20"><path d="M1 1v15l4-3 3 6 3-1-3-6h5z" fill="#fff" stroke="#000" /></svg></Pointer>

      <Float>
        <FloatTabs>
          <PanelTab $w={53} $on>字符</PanelTab>
          <PanelTab $w={54}>段落</PanelTab>
          <FloatMenu>
            <svg width="13" height="11" viewBox="0 0 13 11"><path d="M1 1l4.500 4.500L1 10M7 1l4.500 4.500L7 10" fill="none" stroke="#cfcfcf" /></svg>
            <svg width="1" height="13" viewBox="0 0 1 13"><rect width="1" height="13" fill="#cfcfcf" /></svg>
            <svg width="11" height="8" viewBox="0 0 11 8"><path d="M0 1h11M0 4h11M0 7h11" stroke="#cfcfcf" /></svg>
          </FloatMenu>
        </FloatTabs>
        <FloatRow $mt={19} $pl={7}>
          <FloatCol $w={187}><Select w={160} text="方正兰亭大黑..." dim /></FloatCol>
          <Select w={96} text="-" />
        </FloatRow>
        <FloatRow $mt={13}>
          <FloatCol $w={153}><IconSlot $w={29}><SizeIcon /></IconSlot><Select w={113} text={<>66<Unit>点</Unit></>} /></FloatCol>
          <IconSlot $w={28}><LeadIcon /></IconSlot><Select w={104} text={<UnitBare>(自动)</UnitBare>} />
        </FloatRow>
        <FloatRow $mt={8}>
          <FloatCol $w={153}><IconSlot $w={29}><KernIcon /></IconSlot><Select w={113} text="0" /></FloatCol>
          <IconSlot $w={28}><TrackIcon /></IconSlot><Select w={104} text="300" />
        </FloatRow>
        <FloatRow $mt={8}>
          <FloatCol $w={153}><IconSlot $w={29}><TsumeIcon /></IconSlot><Select w={113} text="0%" /></FloatCol>
        </FloatRow>
        <FloatRow $mt={7} $h={26}>
          <FloatCol $w={185} $full><IconSlot $w={27}><VScaleIcon /></IconSlot><TextInput $w={74}>100%</TextInput></FloatCol>
          <IconSlot $w={27}><HScaleIcon /></IconSlot><TextInput $w={73}>100%</TextInput>
        </FloatRow>
        <FloatRow $mt={6} $h={26}>
          <FloatCol $w={164} $full><IconSlot $w={29}><BaseIcon /></IconSlot><TextInput $w={73}>5<Unit>点</Unit></TextInput></FloatCol>
          <Label $w={48}>颜色:</Label><Swatch $w={75} $h={28} />
        </FloatRow>
        <GlyphRow $mt={7}>
          <Glyph>T</Glyph>
          <Glyph $i>T</Glyph>
          <Glyph>TT</Glyph>
          <Glyph>T<SmallCap>T</SmallCap></Glyph>
          <Glyph>T<Sup>1</Sup></Glyph>
          <Glyph>T<Sub>1</Sub></Glyph>
          <Glyph $ul>T</Glyph>
          <Glyph $st>T</Glyph>
        </GlyphRow>
        <GlyphRow $mt={8} $dim>
          <Glyph>ﬁ</Glyph>
          <Glyph $i>σ</Glyph>
          <Glyph>st</Glyph>
          <Glyph $i>A</Glyph>
          <Glyph $ol>aa</Glyph>
          <Glyph $i>T</Glyph>
          <Glyph>1<Sup>st</Sup></Glyph>
          <Glyph>½</Glyph>
        </GlyphRow>
        <FloatRow $mt={8} $h={27} $pl={7}>
          <Select w={160} h={27} text="美国英语" line={false} pl={10} fs={16} />
          <IconSlot $w={27} $ml={8}><AaIcon /></IconSlot>
          <Select w={89} h={27} text="平滑" line={false} pl={11} fs={16} />
        </FloatRow>
      </Float>

      <RecBar>
        <Pause />
        <Stop />
        <RecDiv $ml={26} />
        <Timer>00:00:00</Timer>
        <RecDiv $ml={31} />
        <RecIcon $ml={34}>
          <svg width="22" height="22" viewBox="0 0 22 22"><path d="M8 1v7H1M14 1v7h7M8 21v-7H1M14 21v-7h7" fill="none" stroke="#fff" strokeWidth="2.600" /></svg>
        </RecIcon>
        <RecIcon $ml={27}>
          <svg width="25" height="21" viewBox="0 0 25 21"><path d="M1 5h6l2-4h7l2 4h6v13H1z" fill="#fff" /><circle cx="12.500" cy="11" r="5" fill="#202020" /><circle cx="12.500" cy="11" r="2.500" fill="#fff" /><rect x="1" y="18" width="23" height="3" fill="#888" /></svg>
        </RecIcon>
      </RecBar>
    </Page>
  );
}
